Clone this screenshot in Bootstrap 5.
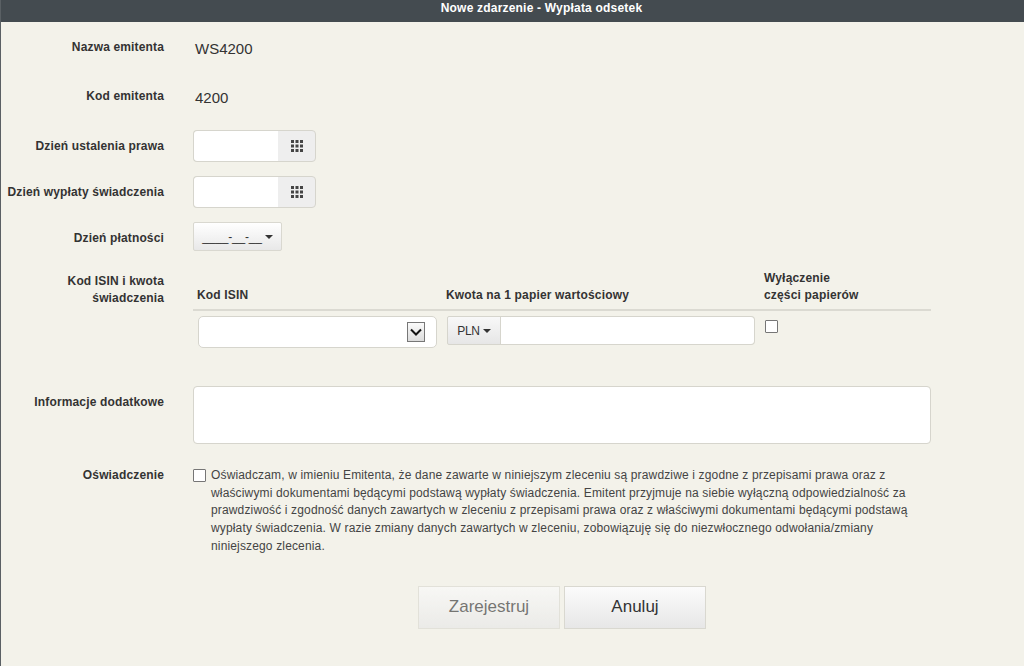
<!DOCTYPE html>
<html lang="pl">
<head>
  <meta charset="UTF-8" />
  <meta name="viewport" content="width=device-width, initial-scale=1.0" />
  <title>Nowe zdarzenie</title>
  <link href="https://cdn.jsdelivr.net/npm/bootstrap@5.3.3/dist/css/bootstrap.min.css" rel="stylesheet" />
  <style>
    html, body { height: 100%; }
    body {
      background: #f3f2ea;
      font-family: "Liberation Sans", Arial, sans-serif;
      color: #333;
      font-size: 12px;
      border-left: 1px solid #5a6064;
      overflow: hidden;
    }
    .top-bar {
      background: #444b50;
      color: #fff;
      height: 22px;
      line-height: 16px;
      font-size: 12px;
      font-weight: 700;
      letter-spacing: .2px;
      text-align: center;
      padding-left: 58px;
    }
    .form-line { display: flex; }
    .field-label {
      width: 163px;
      flex: none;
      text-align: right;
      font-weight: 700;
      font-size: 12px;
      line-height: 16px;
      letter-spacing: .15px;
      color: #333;
    }
    .field-body { margin-left: 29px; font-size: 15px; }
    .line-name { height: 48px; padding-top: 17px; }
    .line-code { height: 60px; padding-top: 18px; }
    .line-name .field-body, .line-code .field-body { line-height: 20px; padding-left: 2px; }
    .line-date { height: 46px; align-items: flex-start; }
    .line-date .field-label { margin-top: 8px; }
    .date-group { width: 124px; height: 32px; }
    .date-group .form-control {
      border: 1px solid #d6d5cd;
      border-right: 0;
      height: 32px;
      border-radius: 4px 0 0 4px;
      width: 85px;
      flex: none;
    }
    .date-addon {
      width: 39px;
      background: #eeeeee;
      border: 1px solid #d6d5cd;
      border-radius: 0 4px 4px 0;
      display: flex;
      align-items: center;
      justify-content: center;
    }
    .line-pay { height: 48px; align-items: flex-start; }
    .line-pay .field-label { margin-top: 8px; }
    .dropdown-toggle::after {
      vertical-align: middle;
      border-top-width: 4px;
      border-left-width: 4px;
      border-right-width: 4px;
      margin-left: 3px;
    }
    .pay-btn {
      width: 89px;
      height: 29px;
      padding: 0;
      font-size: 12px;
      letter-spacing: -.2px;
      color: #333;
      background: linear-gradient(#fff, #e8e8e8);
      border: 1px solid #d9d8d0;
      border-radius: 2px;
    }
    .line-isin { height: 116px; }
    .line-isin .field-label { line-height: 17px; margin-top: 3px; }
    .isin-wrap { width: 738px; flex: none; font-size: 12px; }
    .isin-head {
      display: flex;
      height: 42px;
      border-bottom: 2px solid #dbdad2;
      font-weight: 700;
      letter-spacing: .17px;
      line-height: 17px;
      padding-left: 4px;
      align-items: flex-end;
      padding-bottom: 5px;
      margin-top: -1px;
    }
    .isin-head > div:nth-child(1) { width: 249px; }
    .isin-head > div:nth-child(2) { width: 318px; }
    .isin-cells { display: flex; padding-top: 5px; padding-left: 5px; }
    .isin-select {
      width: 239px;
      height: 32px;
      background: #fff;
      border: 1px solid #d6d5cd;
      border-radius: 5px;
      display: flex;
      align-items: center;
      justify-content: flex-end;
      padding-right: 11px;
    }
    .select-arrow {
      width: 18px;
      height: 20px;
      border: 1px solid #777;
      background: linear-gradient(#fafafa, #dcdcdc);
      display: flex;
      align-items: center;
      justify-content: center;
    }
    .amount-group {
      width: 308px;
      height: 29px;
      margin-left: 10px;
      flex-wrap: nowrap;
    }
    .cur-btn {
      width: 54px;
      padding: 0;
      font-size: 12px;
      letter-spacing: -.3px;
      color: #333;
      background: linear-gradient(#f8f8f8, #e6e6e6);
      border: 1px solid #d6d5cd;
      border-radius: 2px 0 0 2px;
    }
    .amount-group .form-control {
      border: 1px solid #d6d5cd;
      border-left: 0;
      border-radius: 0 4px 4px 0;
    }
    .plain-check {
      appearance: none;
      width: 13px;
      height: 13px;
      background: #fff;
      border: 1px solid #767676;
      border-radius: 1px;
      margin: 0;
      display: block;
    }
    .isin-check { margin: 4px 0 0 10px; }
    .line-info { height: 81px; }
    .line-info .field-label { margin-top: 8px; }
    .info-area {
      width: 738px;
      height: 58px;
      border: 1px solid #d6d5cd;
      border-radius: 4px;
      resize: none;
    }
    .stmt-body { display: flex; width: 722px; font-size: 12px; line-height: 17.7px; letter-spacing: .15px; color: #444; }
    .stmt-body .plain-check { flex: none; margin: 2px 5px 0 0; }
    .stmt-body p { margin: 0; }
    .action-row { gap: 4px; margin-top: 30px; padding-left: 99px; }
    .action-btn {
      width: 142px;
      height: 43px;
      padding: 0;
      font-size: 17px;
      color: #333;
      background: linear-gradient(#fbfbfb, #e7e7e7);
      border: 1px solid #d9d8d0;
      border-radius: 0;
    }
    .action-btn:disabled {
      color: #333;
      background: linear-gradient(#fbfbfb, #e7e7e7);
      border-color: #d9d8d0;
      opacity: .65;
    }
  </style>
</head>
<body>
  <div class="top-bar">Nowe zdarzenie - Wypłata odsetek</div>

  <div class="form-line line-name">
    <div class="field-label">Nazwa emitenta</div>
    <div class="field-body">WS4200</div>
  </div>
  <div class="form-line line-code">
    <div class="field-label">Kod emitenta</div>
    <div class="field-body">4200</div>
  </div>

  <div class="form-line line-date">
    <div class="field-label">Dzień ustalenia prawa</div>
    <div class="field-body">
      <div class="input-group date-group">
        <input class="form-control" type="text" />
        <span class="date-addon">
          <svg width="12" height="12" viewBox="0 0 12 12" fill="#444"><path d="M0 0h3v3H0zM4.500 0h3v3h-3zM9 0h3v3H9zM0 4.500h3v3H0zM4.500 4.500h3v3h-3zM9 4.500h3v3H9zM0 9h3v3H0zM4.500 9h3v3h-3zM9 9h3v3H9z"/></svg>
        </span>
      </div>
    </div>
  </div>
  <div class="form-line line-date">
    <div class="field-label">Dzień wypłaty świadczenia</div>
    <div class="field-body">
      <div class="input-group date-group">
        <input class="form-control" type="text" />
        <span class="date-addon">
          <svg width="12" height="12" viewBox="0 0 12 12" fill="#444"><path d="M0 0h3v3H0zM4.500 0h3v3h-3zM9 0h3v3H9zM0 4.500h3v3H0zM4.500 4.500h3v3h-3zM9 4.500h3v3H9zM0 9h3v3H0zM4.500 9h3v3h-3zM9 9h3v3H9z"/></svg>
        </span>
      </div>
    </div>
  </div>

  <div class="form-line line-pay">
    <div class="field-label">Dzień płatności</div>
    <div class="field-body">
      <button class="btn dropdown-toggle pay-btn" type="button">____-__-__</button>
    </div>
  </div>

  <div class="form-line line-isin">
    <div class="field-label">Kod ISIN i kwota świadczenia</div>
    <div class="field-body isin-wrap">
      <div class="isin-head">
        <div>Kod ISIN</div>
        <div>Kwota na 1 papier wartościowy</div>
        <div>Wyłączenie<br />części papierów</div>
      </div>
      <div class="isin-cells">
        <div class="isin-select">
          <span class="select-arrow">
            <svg width="12" height="8" viewBox="0 0 12 8" fill="none" stroke="#111" stroke-width="2"><path d="M1 1.500l5 5 5-5"/></svg>
          </span>
        </div>
        <div class="input-group amount-group">
          <button class="btn dropdown-toggle cur-btn" type="button">PLN</button>
          <input class="form-control" type="text" />
        </div>
        <input class="plain-check isin-check" type="checkbox" />
      </div>
    </div>
  </div>

  <div class="form-line line-info">
    <div class="field-label">Informacje dodatkowe</div>
    <div class="field-body">
      <textarea class="form-control info-area"></textarea>
    </div>
  </div>

  <div class="form-line line-stmt">
    <div class="field-label">Oświadczenie</div>
    <div class="field-body stmt-body">
      <input class="plain-check" type="checkbox" />
      <p>Oświadczam, w imieniu Emitenta, że dane zawarte w niniejszym zleceniu są prawdziwe i zgodne z przepisami prawa oraz z właściwymi dokumentami będącymi podstawą wypłaty świadczenia. Emitent przyjmuje na siebie wyłączną odpowiedzialność za prawdziwość i zgodność danych zawartych w zleceniu z przepisami prawa oraz z właściwymi dokumentami będącymi podstawą wypłaty świadczenia. W razie zmiany danych zawartych w zleceniu, zobowiązuję się do niezwłocznego odwołania/zmiany niniejszego zlecenia.</p>
    </div>
  </div>

  <div class="d-flex justify-content-center action-row">
    <button class="btn action-btn" type="button" disabled>Zarejestruj</button>
    <button class="btn action-btn" type="button">Anuluj</button>
  </div>
</body>
</html>
